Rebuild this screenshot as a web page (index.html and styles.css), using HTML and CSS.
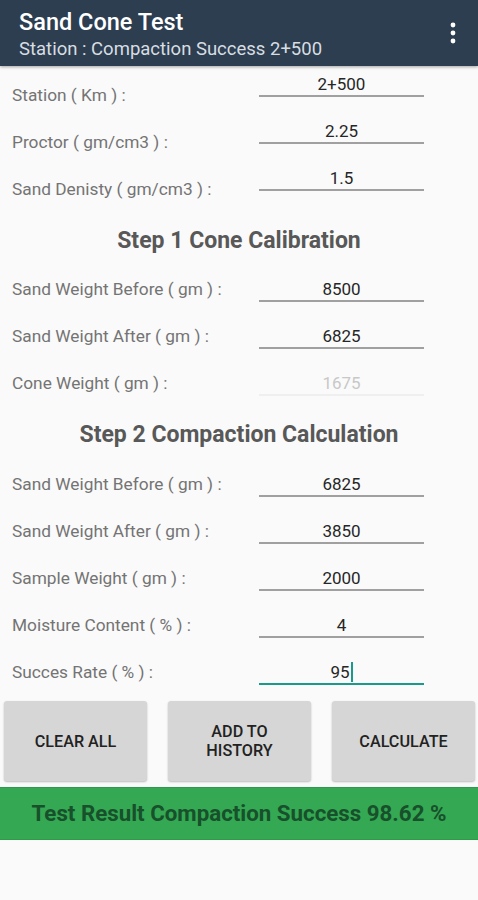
FILE: index.html
```html
<!DOCTYPE html>
<html>
<head>
<meta charset="utf-8">
<link rel="stylesheet" href="styles.css">
</head>
<body>
<header class="appbar">
  <div class="titles">
    <div class="title">Sand Cone Test</div>
    <div class="subtitle">Station : Compaction Success 2+500</div>
  </div>
  <svg class="kebab" width="8" height="22" viewBox="0 0 8 22">
    <circle cx="4" cy="3" r="2.4" fill="#fff"/>
    <circle cx="4" cy="11" r="2.4" fill="#fff"/>
    <circle cx="4" cy="19" r="2.4" fill="#fff"/>
  </svg>
</header>
<main class="form">
  <div class="row raised"><span class="label">Station ( Km ) :</span><span class="field">2+500</span></div>
  <div class="row raised"><span class="label">Proctor ( gm/cm3 ) :</span><span class="field">2.25</span></div>
  <div class="row raised"><span class="label">Sand Denisty ( gm/cm3 ) :</span><span class="field">1.5</span></div>
  <h2 class="step">Step 1 Cone Calibration</h2>
  <div class="row"><span class="label">Sand Weight Before ( gm ) :</span><span class="field">8500</span></div>
  <div class="row"><span class="label">Sand Weight After ( gm ) :</span><span class="field">6825</span></div>
  <div class="row"><span class="label">Cone Weight ( gm ) :</span><span class="field disabled">1675</span></div>
  <h2 class="step step2">Step 2 Compaction Calculation</h2>
  <div class="row"><span class="label">Sand Weight Before ( gm ) :</span><span class="field">6825</span></div>
  <div class="row"><span class="label">Sand Weight After ( gm ) :</span><span class="field">3850</span></div>
  <div class="row"><span class="label">Sample Weight ( gm ) :</span><span class="field">2000</span></div>
  <div class="row"><span class="label">Moisture Content ( % ) :</span><span class="field">4</span></div>
  <div class="row"><span class="label">Succes Rate ( % ) :</span><span class="field active">95<span class="cursor"></span></span></div>
  <div class="buttons">
    <button class="btn">CLEAR ALL</button>
    <button class="btn">ADD TO<br>HISTORY</button>
    <button class="btn">CALCULATE</button>
  </div>
  <div class="result">Test Result Compaction Success 98.62 %</div>
</main>
</body>
</html>
```
FILE: styles.css
```css
* { box-sizing: border-box; }
html, body { margin: 0; padding: 0; }
body {
  background: #fafafa;
  font-family: Roboto, "Liberation Sans", sans-serif;
  width: 478px;
  height: 900px;
  overflow: hidden;
}
.appbar {
  height: 66px;
  background: #2c3e50;
  display: flex;
  align-items: flex-start;
  justify-content: space-between;
  padding: 8px 20px 0 19px;
  box-shadow: 0 1px 3px rgba(0,0,0,0.35);
  position: relative;
}
.title {
  color: #fff;
  font-size: 23.5px;
  font-weight: 500;
  line-height: 28px;
}
.subtitle {
  color: #d8dde2;
  font-size: 18.5px;
  line-height: 22px;
  margin-top: 2px;
}
.kebab { margin-top: 14px; margin-right: 1px; }
.form { display: flex; flex-direction: column; }
.row {
  height: 47px;
  display: grid;
  grid-template-columns: 259px 165px;
  align-items: start;
}
.label {
  padding-left: 12px;
  margin-top: 19px;
  font-size: 17.3px;
  line-height: 20px;
  color: #747474;
  white-space: nowrap;
}
.field {
  margin-top: 19px;
  line-height: 20px;
  padding-bottom: 1px;
  text-align: center;
  font-size: 17px;
  color: #262626;
  border-bottom: 2px solid #a0a0a0;
}
.row.raised .field { margin-top: 8px; }
.field.disabled { color: #c8c8c8; border-bottom-color: #efefef; }
.field.active { border-bottom-color: #1a9a8a; }
.cursor {
  display: inline-block;
  width: 2px;
  height: 20px;
  background: #1a9a8a;
  vertical-align: -4px;
  margin-left: 1px;
}
.step {
  margin: 0;
  height: 53px;
  padding-top: 20px;
  text-align: center;
  font-size: 23px;
  line-height: 28px;
  font-weight: 700;
  color: #585858;
}
.step.step2 { height: 54px; }
.buttons {
  margin-top: 11px;
  display: flex;
  justify-content: space-between;
  padding: 0 3px 0 4px;
  height: 80px;
}
.btn {
  width: 143px;
  height: 80px;
  background: #d6d6d6;
  border: none;
  border-radius: 3px;
  box-shadow: 0 1px 2px rgba(0,0,0,0.25);
  font-family: Roboto, "Liberation Sans", sans-serif;
  font-size: 16.2px;
  font-weight: 500;
  line-height: 19px;
  color: #222;
  padding: 0;
}
.result {
  margin-top: 6px;
  height: 53px;
  background: #34a853;
  border-top: 1px solid #2e9a4a;
  border-bottom: 1px solid #2e9a4a;
  color: #17502a;
  font-size: 22.3px;
  font-weight: 700;
  text-align: center;
  line-height: 51px;
}
```
